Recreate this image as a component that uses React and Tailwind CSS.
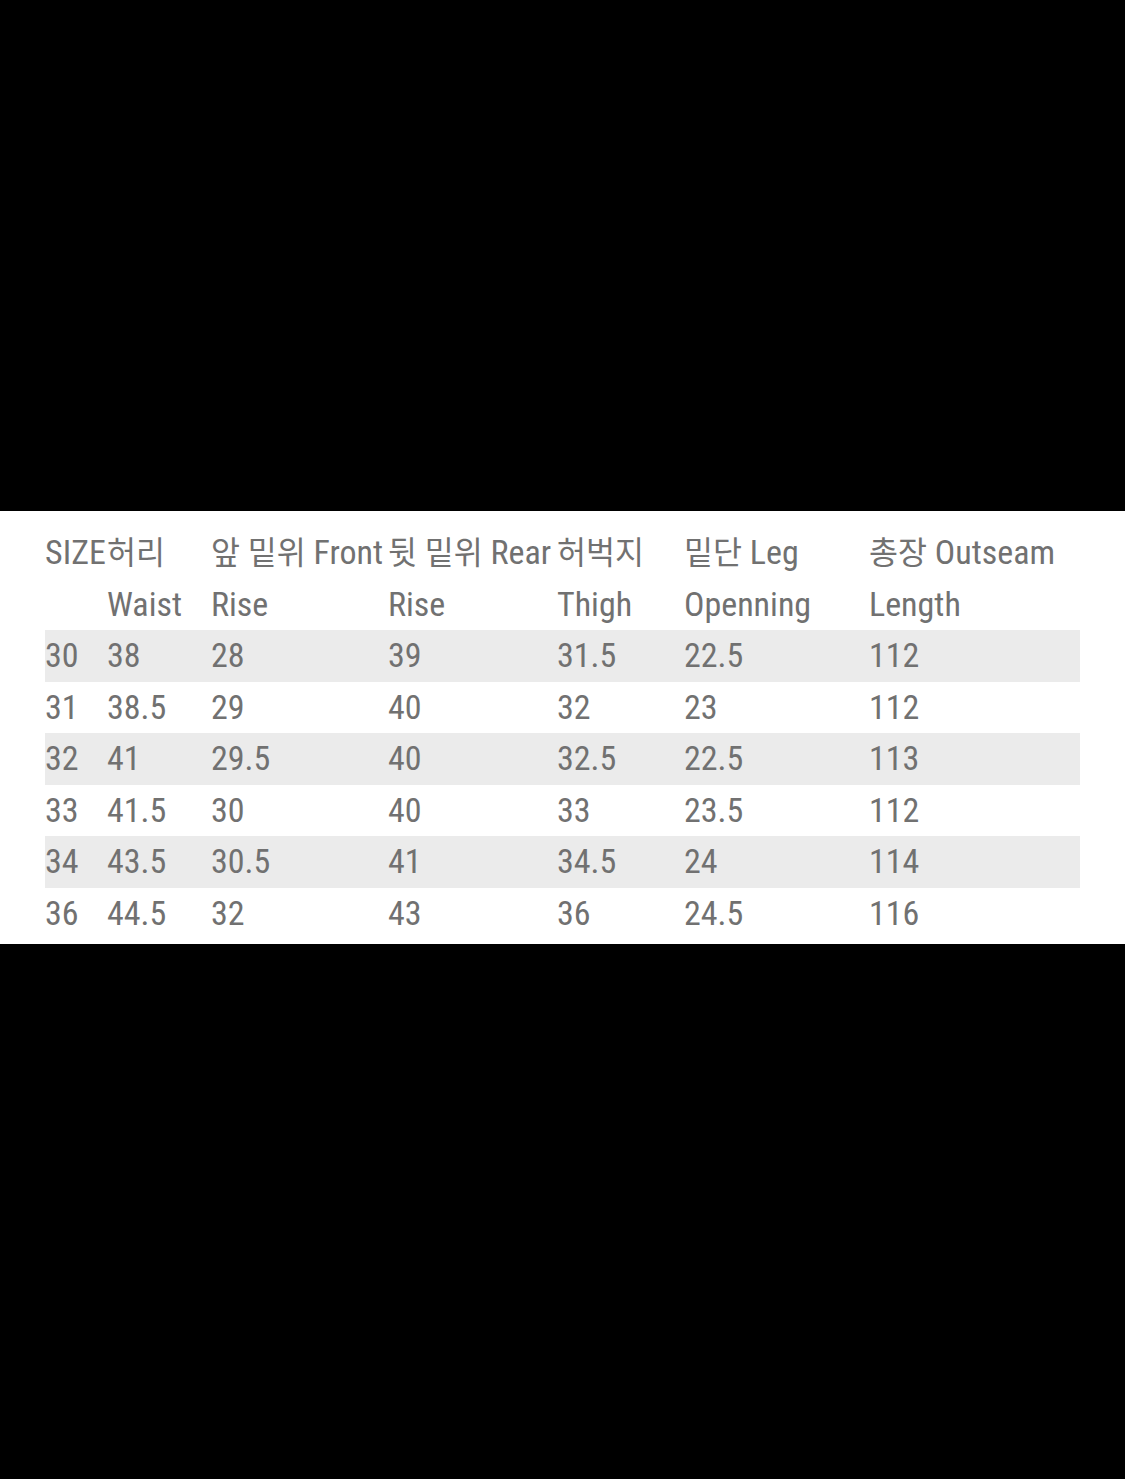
const HEAD = [
  ["SIZE", ""],
  [<K key="k">허리</K>, "Waist"],
  [<><K>앞</K> <K>밑위</K> Front</>, "Rise"],
  [<><K>뒷</K> <K>밑위</K> Rear</>, "Rise"],
  [<K key="k">허벅지</K>, "Thigh"],
  [<><K>밑단</K> Leg</>, "Openning"],
  [<><K>총장</K> Outseam</>, "Length"],
];

const ROWS = [
  ["30", "38", "28", "39", "31.5", "22.5", "112"],
  ["31", "38.5", "29", "40", "32", "23", "112"],
  ["32", "41", "29.5", "40", "32.5", "22.5", "113"],
  ["33", "41.5", "30", "40", "33", "23.5", "112"],
  ["34", "43.5", "30.5", "41", "34.5", "24", "114"],
  ["36", "44.5", "32", "43", "36", "24.5", "116"],
];

// korean glyphs render a bit smaller than the latin text
function K({ children }) {
  return <span className="text-[31.5px]">{children}</span>;
}

function Row({ cells, shaded }) {
  return (
    <div
      className={`grid h-[51.5px] grid-cols-[62px_104px_177px_169px_127px_185px_211px] whitespace-nowrap leading-[51.5px] ${
        shaded ? "bg-[#ebebeb]" : ""
      }`}
    >
      {cells.map((c, i) => (
        <div key={i}>{c}</div>
      ))}
    </div>
  );
}

export default function App() {
  return (
    <div className="min-h-[1479px] bg-black font-['Roboto_Condensed','Noto_Sans_CJK_KR',sans-serif] text-[34px] text-[#717171]">
      <div className="h-[511px]" />
      <div className="h-[433px] bg-white pt-[16px]">
        <div className="ml-[45px] w-[1035px]">
          <Row cells={HEAD.map((h) => h[0])} />
          <Row cells={HEAD.map((h) => h[1])} />
          {ROWS.map((r, i) => (
            <Row key={r[0]} cells={r} shaded={i % 2 === 0} />
          ))}
        </div>
      </div>
    </div>
  );
}
